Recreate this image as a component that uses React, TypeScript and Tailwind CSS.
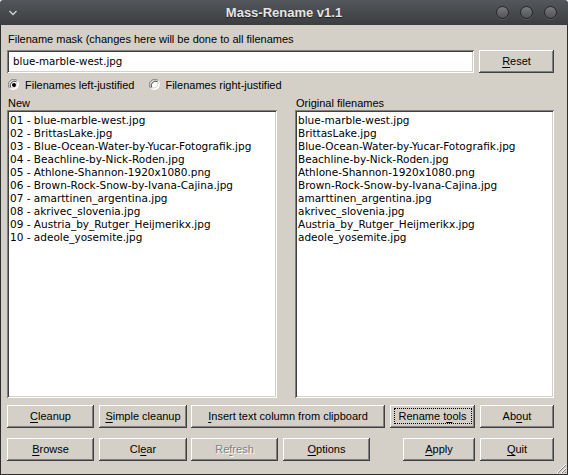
import React from "react";

const NEW_NAMES = [
  "01 - blue-marble-west.jpg",
  "02 - BrittasLake.jpg",
  "03 - Blue-Ocean-Water-by-Yucar-Fotografik.jpg",
  "04 - Beachline-by-Nick-Roden.jpg",
  "05 - Athlone-Shannon-1920x1080.png",
  "06 - Brown-Rock-Snow-by-Ivana-Cajina.jpg",
  "07 - amarttinen_argentina.jpg",
  "08 - akrivec_slovenia.jpg",
  "09 - Austria_by_Rutger_Heijmerikx.jpg",
  "10 - adeole_yosemite.jpg",
];

const ORIGINAL_NAMES = [
  "blue-marble-west.jpg",
  "BrittasLake.jpg",
  "Blue-Ocean-Water-by-Yucar-Fotografik.jpg",
  "Beachline-by-Nick-Roden.jpg",
  "Athlone-Shannon-1920x1080.png",
  "Brown-Rock-Snow-by-Ivana-Cajina.jpg",
  "amarttinen_argentina.jpg",
  "akrivec_slovenia.jpg",
  "Austria_by_Rutger_Heijmerikx.jpg",
  "adeole_yosemite.jpg",
];

const raised =
  "bg-[#d4d0c8] shadow-[inset_-1px_-1px_0_#404040,inset_1px_1px_0_#ffffff,inset_-2px_-2px_0_#808080,inset_2px_2px_0_#d4d0c8]";
const sunken =
  "bg-white shadow-[inset_1px_1px_0_#808080,inset_-1px_-1px_0_#ffffff,inset_2px_2px_0_#404040,inset_-2px_-2px_0_#d4d0c8]";

function Btn({
  className,
  children,
  disabled,
  focused,
}: {
  className: string;
  children: React.ReactNode;
  disabled?: boolean;
  focused?: boolean;
}) {
  return (
    <div
      className={`relative h-[23px] shrink-0 flex items-center justify-center text-[11px] leading-[13px] ${raised} ${
        disabled ? "text-[#808080] [text-shadow:1px_1px_0_#ffffff]" : "text-black"
      } ${className}`}
    >
      {focused && <div className="absolute left-[4px] right-[3px] top-[3px] bottom-[4px] border border-dotted border-black" />}
      <span className="relative">{children}</span>
    </div>
  );
}

function U({ children }: { children: React.ReactNode }) {
  return <span className="underline underline-offset-[2px] decoration-1">{children}</span>;
}

function Radio({ checked }: { checked?: boolean }) {
  return (
    <svg width="12" height="12" viewBox="0 0 12 12" className="shrink-0">
      <path d="M1.5 9.2 A5.5 5.5 0 0 1 9.2 1.5" fill="none" stroke="#808080" strokeWidth="1" />
      <path d="M9.2 1.5 A5.5 5.5 0 0 1 1.5 9.2" fill="none" stroke="#ffffff" strokeWidth="1" />
      <circle cx="6" cy="6" r="4.5" fill="#ffffff" />
      <path d="M2.6 8.6 A4.5 4.5 0 0 1 8.6 2.6" fill="none" stroke="#404040" strokeWidth="1" />
      <path d="M8.6 2.6 A4.5 4.5 0 0 1 2.6 8.6" fill="none" stroke="#d4d0c8" strokeWidth="1" />
      {checked && <circle cx="6" cy="6" r="2" fill="#000000" />}
    </svg>
  );
}

function ListBox({ items, className }: { items: string[]; className: string }) {
  return (
    <div className={`h-[288px] pt-[4px] pl-[3px] ${sunken} ${className}`}>
      {items.map((t) => (
        <div
          key={t}
          className="h-[13px] leading-[13px] text-[10.5px] text-black whitespace-nowrap [font-family:'DejaVu_Sans',sans-serif]"
        >
          {t}
        </div>
      ))}
    </div>
  );
}

export default function App() {
  return (
    <div className="w-[568px] h-[475px] flex flex-col overflow-hidden [font-family:'Liberation_Sans',Arial,sans-serif]">
      {/* title bar */}
      <div className="relative h-[25px] shrink-0 flex items-center bg-gradient-to-b from-[#54575b] to-[#3b3d40] rounded-t-[3px]">
        <svg width="10" height="8" viewBox="0 0 10 8" className="ml-[8px]">
          <polyline points="1.5,2 5,5.5 8.5,2" fill="none" stroke="#d0d0d0" strokeWidth="1.4" />
        </svg>
        <div className="absolute inset-x-0 top-0 h-[25px] flex items-center justify-center text-[13px] font-bold text-[#e6e6e6] [text-shadow:0_1px_1px_#1a1a1a]">
          Mass-Rename v1.1
        </div>
        <div className="ml-auto mr-[11px] flex items-center gap-[11px]">
          {[0, 1, 2].map((i) => (
            <div
              key={i}
              className="w-[13px] h-[13px] rounded-full bg-gradient-to-b from-[#7a7c7f] to-[#505255] border border-[#232425] shadow-[0_1px_0_#5a5c5f]"
            />
          ))}
        </div>
      </div>

      {/* window body */}
      <div className="relative flex-1 flex flex-col bg-[#d4d0c8] border-x border-b border-[#2e2f31] pl-[6px] pr-[12px] text-[11px] text-black">
        <div className="mt-[7px] h-[14px] leading-[14px] pl-[1px]">
          Filename mask (changes here will be done to all filenames
        </div>

        <div className="mt-[4px] flex">
          <div className={`w-[467px] h-[23px] flex items-center pl-[6px] ${sunken}`}>
            <span className="text-[10.3px] [font-family:'DejaVu_Sans',sans-serif]">blue-marble-west.jpg</span>
          </div>
          <Btn className="ml-[5px] w-[75px]">
            <U>R</U>eset
          </Btn>
        </div>

        <div className="mt-[5px] h-[14px] flex items-center">
          <div className="ml-[1px] flex items-center gap-[5px]">
            <Radio checked />
            <span>Filenames left-justified</span>
          </div>
          <div className="ml-[15px] flex items-center gap-[4px]">
            <Radio />
            <span>Filenames right-justified</span>
          </div>
        </div>

        <div className="mt-[5px] flex h-[13px] leading-[13px]">
          <div className="w-[288px] pl-[1px]">New</div>
          <div className="pl-[1px]">Original filenames</div>
        </div>

        <div className="flex">
          <ListBox items={NEW_NAMES} className="w-[270px]" />
          <ListBox items={ORIGINAL_NAMES} className="ml-[18px] w-[259px]" />
        </div>

        <div className="mt-[7px] flex">
          <Btn className="w-[87px]">
            <U>C</U>leanup
          </Btn>
          <Btn className="ml-[5px] w-[88px]">
            <U>S</U>imple cleanup
          </Btn>
          <Btn className="ml-[4px] w-[194px]">
            <U>I</U>nsert text column from clipboard
          </Btn>
          <Btn className="ml-[5px] w-[85px]" focused>
            Rename t<U>o</U>ols
          </Btn>
          <Btn className="ml-[5px] w-[74px]">
            Ab<U>o</U>ut
          </Btn>
        </div>

        <div className="mt-[10px] flex">
          <Btn className="w-[87px]">
            <U>B</U>rowse
          </Btn>
          <Btn className="ml-[5px] w-[88px]">
            Cl<U>e</U>ar
          </Btn>
          <Btn className="ml-[4px] w-[87px]" disabled>
            Re<U>f</U>resh
          </Btn>
          <Btn className="ml-[5px] w-[87px]">
            <U>O</U>ptions
          </Btn>
          <Btn className="ml-[33px] w-[72px]">
            <U>A</U>pply
          </Btn>
          <Btn className="ml-[5px] w-[74px]">
            <U>Q</U>uit
          </Btn>
        </div>

        {/* size grip */}
        <svg width="12" height="12" viewBox="0 0 12 12" className="absolute right-0 bottom-0">
          <line x1="11" y1="2" x2="2" y2="11" stroke="#ffffff" />
          <line x1="11" y1="3" x2="3" y2="11" stroke="#808080" />
          <line x1="11" y1="6" x2="6" y2="11" stroke="#ffffff" />
          <line x1="11" y1="7" x2="7" y2="11" stroke="#808080" />
          <line x1="11" y1="10" x2="10" y2="11" stroke="#808080" />
        </svg>
      </div>
    </div>
  );
}
